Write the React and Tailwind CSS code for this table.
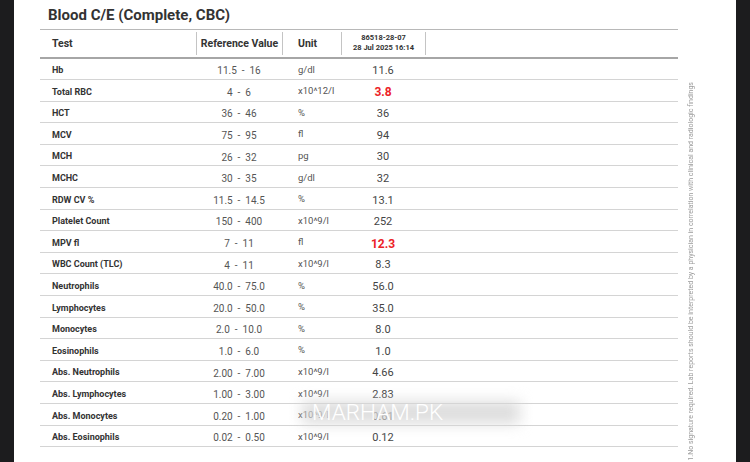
import React from "react";

const rows = [
  ["Hb", "11.5  -  16", "g/dl", "11.6", false],
  ["Total RBC", "4  -  6", "x10^12/l", "3.8", true],
  ["HCT", "36  -  46", "%", "36", false],
  ["MCV", "75  -  95", "fl", "94", false],
  ["MCH", "26  -  32", "pg", "30", false],
  ["MCHC", "30  -  35", "g/dl", "32", false],
  ["RDW CV %", "11.5  -  14.5", "%", "13.1", false],
  ["Platelet Count", "150  -  400", "x10^9/l", "252", false],
  ["MPV fl", "7  -  11", "fl", "12.3", true],
  ["WBC Count (TLC)", "4  -  11", "x10^9/l", "8.3", false],
  ["Neutrophils", "40.0  -  75.0", "%", "56.0", false],
  ["Lymphocytes", "20.0  -  50.0", "%", "35.0", false],
  ["Monocytes", "2.0  -  10.0", "%", "8.0", false],
  ["Eosinophils", "1.0  -  6.0", "%", "1.0", false],
  ["Abs. Neutrophils", "2.00  -  7.00", "x10^9/l", "4.66", false],
  ["Abs. Lymphocytes", "1.00  -  3.00", "x10^9/l", "2.83", false],
  ["Abs. Monocytes", "0.20  -  1.00", "x10^9/l", "0.61", false],
  ["Abs. Eosinophils", "0.02  -  0.50", "x10^9/l", "0.12", false],
];

function Divider() {
  return <div className="w-px h-[23px] bg-[#c4c4c4]" />;
}

export default function App() {
  return (
    <div
      className="w-[750px] h-[462px] flex overflow-hidden"
      style={{ fontFamily: "Roboto, 'Liberation Sans', sans-serif" }}
    >
      <div className="w-[14px] bg-[#1c1c1e] shrink-0" />
      <div className="flex-1 bg-white relative flex">
        <div className="pl-[26px] w-[664px] shrink-0">
          <div className="h-[29px] pl-[8px] pt-[5px] text-[15px] leading-[20px] font-bold text-[#333]">
            Blood C/E (Complete, CBC)
          </div>
          <div className="w-[638px]">
            {/* header */}
            <div className="h-[29.5px] border-t border-[#b8b8b8] border-b-2 border-b-[#a6a6a6] flex items-center text-[#333] font-bold">
              <div className="w-[156px] pl-[12px] text-[10.5px] pt-[2px]">Test</div>
              <Divider />
              <div className="w-[85px] text-center text-[10.5px] pt-[2px]">Reference Value</div>
              <Divider />
              <div className="w-[58px] pl-[15px] text-[10.5px] pt-[2px]">Unit</div>
              <Divider />
              <div className="w-[83px] text-center text-[7.5px] leading-[10.5px]">
                <div>86518-28-07</div>
                <div>28 Jul 2025 16:14</div>
              </div>
              <Divider />
            </div>
            {rows.map(([name, ref, unit, val, red], i) => (
              <div
                key={i}
                className="h-[21.6px] border-b border-[#d4d4d4] flex items-center pt-[4px]"
              >
                <div className="w-[156px] pl-[12px] text-[9px] font-bold text-[#333]">{name}</div>
                <div className="w-[86px] text-center text-[10px] text-[#555] whitespace-pre">{ref}</div>
                <div className="w-[59px] pl-[16px] text-[9.5px] text-[#555] -mt-[2px]">{unit}</div>
                <div
                  className={
                    "w-[84px] text-center " +
                    (red
                      ? "text-[12px] font-bold text-[#ec2227]"
                      : "text-[11px] text-[#444] mt-[1px]")
                  }
                >
                  {val}
                </div>
              </div>
            ))}
          </div>
        </div>
        <div className="flex-1 flex items-end pl-[9px]">
          <div className="[writing-mode:vertical-rl] rotate-180 text-[7px] leading-[8px] text-[#9a9a9a] whitespace-nowrap mb-[1px]">
            1.No signature required. Lab reports should be interpreted by a physician in correlation with clinical and radiologic findings
          </div>
        </div>
        {/* watermark */}
        <div className="absolute left-[282px] top-[396px] w-[230px] h-[33px] pointer-events-none">
          <div className="absolute inset-x-[6px] inset-y-[5px] bg-[#d6d6d6]/80 blur-[7px]" />
          <div className="relative h-full flex items-center pl-[16px] text-[22.5px] font-light text-white">
            MARHAM.PK
          </div>
        </div>
      </div>
      <div className="w-[14px] bg-[#1c1c1e] shrink-0" />
    </div>
  );
}
